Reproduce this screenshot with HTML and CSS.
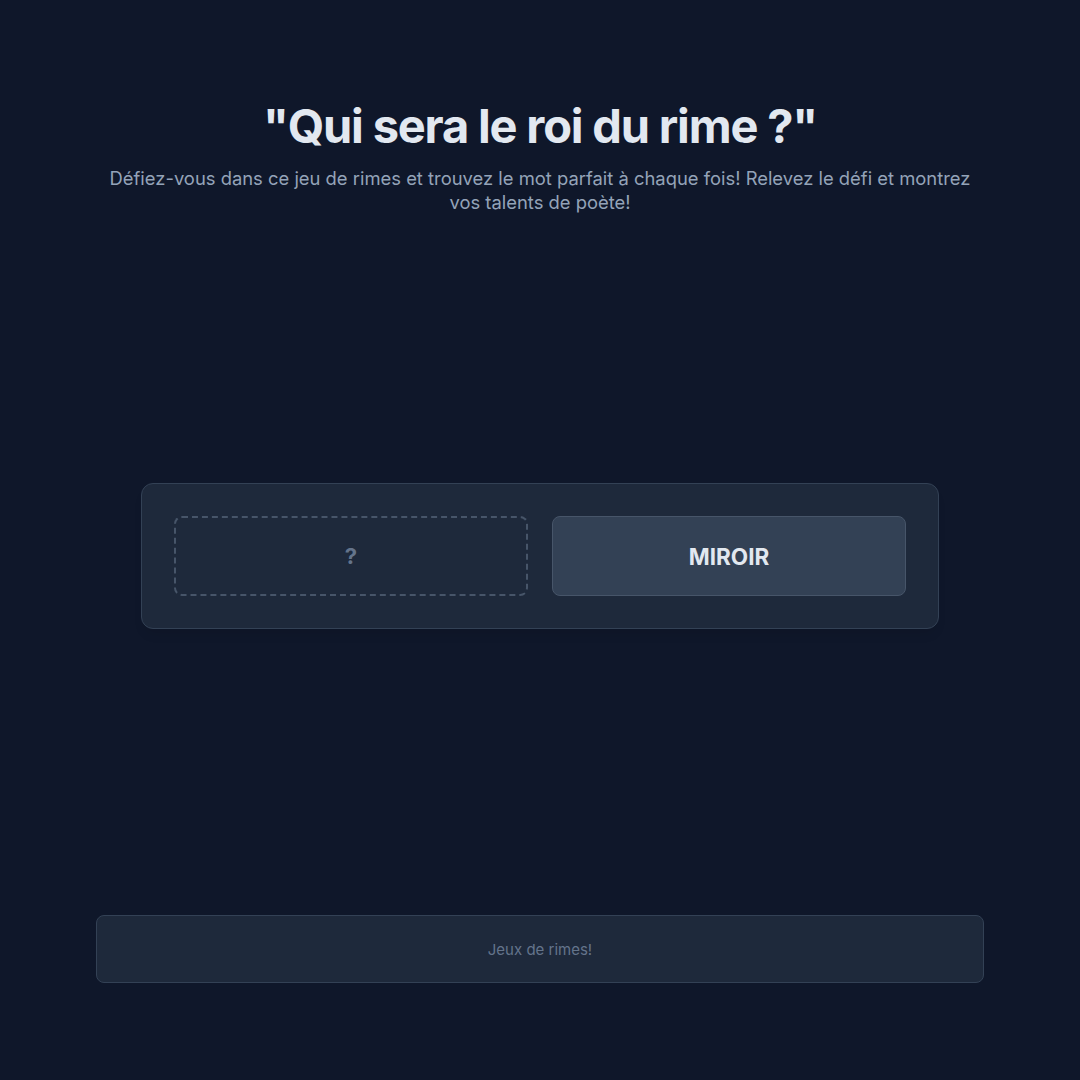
FILE: index.html
```html
<!DOCTYPE html>
<html lang="fr">
<head>
<meta charset="utf-8">
<title>Qui sera le roi du rime ?</title>
<link rel="stylesheet" href="styles.css">
</head>
<body>
<div class="page">
  <header class="header">
    <h1 class="title">"Qui sera le roi du rime ?"</h1>
    <p class="subtitle">Défiez-vous dans ce jeu de rimes et trouvez le mot parfait à chaque fois! Relevez le défi et montrez vos talents de poète!</p>
  </header>
  <main class="main">
    <div class="card">
      <div class="slot slot-empty">?</div>
      <div class="slot slot-word">MIROIR</div>
    </div>
  </main>
  <footer class="footer">Jeux de rimes!</footer>
</div>
</body>
</html>
```

FILE: styles.css
```css
* { box-sizing: border-box; }
html, body {
  margin: 0;
  padding: 0;
  background: #0f172a;
  font-family: Inter, "Noto Sans", sans-serif;
}
.page {
  height: 1080px;
  width: 888px;
  margin: 0 auto;
  padding: 102px 0 97px;
  display: flex;
  flex-direction: column;
}
.header {
  text-align: center;
}
.title {
  margin: 0;
  font-size: 47px;
  line-height: 48px;
  font-weight: 700;
  color: #e2e8f0;
  letter-spacing: -0.025em;
}
.subtitle {
  margin: 16px 0 0;
  font-size: 18.4px;
  line-height: 24px;
  color: #94a3b8;
}
.main {
  flex: 1;
  display: flex;
  align-items: center;
  justify-content: center;
  padding-bottom: 17px;
}
.card {
  width: 798px;
  padding: 32px;
  display: grid;
  grid-template-columns: 1fr 1fr;
  gap: 24px;
  background: #1e293b;
  border: 1px solid #334155;
  border-radius: 12px;
  box-shadow: 0 8px 12px -4px rgba(0,0,0,0.1);
}
.slot {
  height: 80px;
  display: flex;
  align-items: center;
  justify-content: center;
  border-radius: 8px;
  font-weight: 700;
}
.slot-empty {
  border: 2px dashed #475569;
  color: #64748b;
  font-size: 22px;
}
.slot-word {
  background: #334155;
  border: 1px solid #475569;
  color: #e2e8f0;
  font-size: 22.5px;
}
.footer {
  height: 68px;
  display: flex;
  align-items: center;
  justify-content: center;
  background: #1e293b;
  border: 1px solid #334155;
  border-radius: 8px;
  color: #64748b;
  font-size: 15px;
}
```
